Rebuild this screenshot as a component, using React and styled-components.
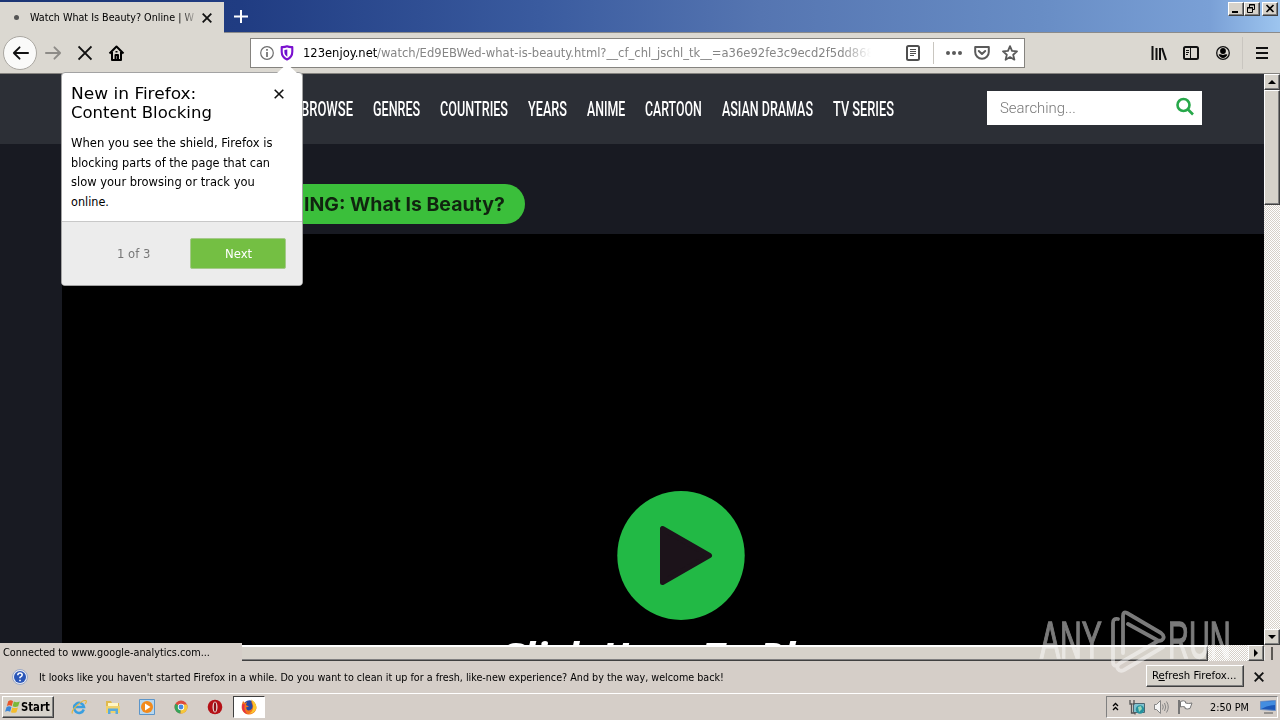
import React, { useLayoutEffect, useRef } from 'react'
import styled, { createGlobalStyle, css } from 'styled-components';

const GlobalStyle = createGlobalStyle`
    * { box-sizing: border-box; }

    body {
        margin: 0;
        overflow: hidden;
        font-family: "DejaVu Sans Condensed", "DejaVu Sans", sans-serif;
        font-size: 11px;
        color: #000;
    }

    svg { display: block; flex: none; }
`

const raised = css`
    border: 1px solid;
    border-color: #fff #404040 #404040 #fff;
    box-shadow: inset -1px -1px 0 #808080;
    background: #d6d2ca;
`

const checker = css`
    background: repeating-conic-gradient(#fff 0 25%, #d6d0c8 0 50%) 0 0 / 2px 2px;
`

const Screen = styled.div`
    position: relative;
    display: flex;
    flex-direction: column;
    width: 1280px;
    height: 720px;
    overflow: hidden;
    background: #d5cec8;
`

/* text squeezed or stretched to a given width */
const FitBox = styled.span`
    display: block;
    flex: none;
    width: ${p => p.$width}px;
    white-space: pre;
`

const FitText = styled.span`
    display: inline-block;
    transform-origin: 0 50%;
`

function Fit({ width, children }) {
    const textRef = useRef()

    useLayoutEffect(() => {
        const el = textRef.current
        el.style.transform = `scaleX(${width / el.offsetWidth})`
    }, [width, children])

    return <FitBox $width={width}><FitText ref={textRef}>{children}</FitText></FitBox>
}

const TitleBar = styled.div`
    display: flex;
    height: 33px;
    flex: none;
    border-bottom: 1px solid #8b8b8b;
    background: linear-gradient(90deg, #1b3574 0, #203c82 240px, #3a5b9f 540px, #5575b1 760px, #688dc5 1040px, #7aa0d6 1210px, #9dc5ef 1280px);
`

const Tab = styled.div`
    display: flex;
    align-items: center;
    width: 224px;
    height: 31px;
    margin: 2px 0 -1px;
    padding-left: 14px;
    background: #dbd8d1;
`

const TabDot = styled.div`
    width: 5px;
    height: 5px;
    margin-right: 11px;
    border-radius: 50%;
    background: #555;
`

const TabTitle = styled.div`
    width: 164px;
    margin-right: 8px;
    overflow: hidden;
    mask-image: linear-gradient(90deg, #000 150px, transparent 168px);
`

const NewTab = styled.div`
    padding: 10px 0 0 10px;
`

const WindowButtons = styled.div`
    display: flex;
    margin: 2px 2px 0 auto;
`

const WindowButton = styled.div`
    ${raised}
    width: 16px;
    height: 14px;
    margin-left: ${p => p.$gap || 0}px;
`

const Toolbar = styled.div`
    display: flex;
    align-items: center;
    flex: none;
    height: 41px;
    padding: 0 12px 0 3px;
    border-bottom: 1px solid #85837f;
    background: #dbd8d1;
`

const BackButton = styled.div`
    display: flex;
    align-items: center;
    justify-content: center;
    width: 34px;
    height: 34px;
    margin-right: 8px;
    border: 1px solid #aaa7a1;
    border-radius: 50%;
    background: #fafaf9;
`

const NavIcons = styled.div`
    display: flex;
    gap: 16px;
`

const UrlBar = styled.div`
    display: flex;
    align-items: center;
    width: 775px;
    height: 30px;
    margin-left: 125px;
    padding: 0 6px 0 9px;
    border: 1px solid #85837f;
    background: #fff;
`

const Url = styled.div`
    display: flex;
    width: 568px;
    margin: 0 35px 0 9px;
    overflow: hidden;
    font-size: 13px;
    line-height: 18px;
    color: #858585;
    mask-image: linear-gradient(90deg, #000 538px, transparent 568px);

    b {
        font-weight: normal;
        color: #000;
    }
`

const Divider = styled.div`
    width: 1px;
    height: ${p => p.$height}px;
    margin: ${p => p.$margin};
    background: #c9c6c0;
`

const Gap = styled.div`
    flex: none;
    width: ${p => p.$width}px;
`

const ToolIcons = styled.div`
    display: flex;
    align-items: center;
    margin-left: auto;
`

const Viewport = styled.div`
    display: flex;
    height: 571px;
    flex: none;
`

const Page = styled.div`
    display: flex;
    flex-direction: column;
    width: 1264px;
    overflow: hidden;
    background: #181a22;
`

const SiteHeader = styled.div`
    display: flex;
    flex: none;
    height: 70px;
    padding: 17px 62px 0 301px;
    background: #2c2f36;
`

const Menu = styled.div`
    display: flex;
    gap: 20px;
    font: 500 19.5px/38px Roboto, sans-serif;
    color: #fff;
`

const Search = styled.div`
    display: flex;
    justify-content: space-between;
    width: 215px;
    height: 34px;
    margin-left: auto;
    padding: 0 8px 0 13px;
    background: #fff;
    font: 300 14.5px/35px Roboto, sans-serif;
    color: #777;
`

const Pill = styled.div`
    display: flex;
    justify-content: flex-end;
    flex: none;
    width: 463px;
    height: 40px;
    margin: 40px 0 10px 62px;
    padding-right: 20px;
    border-radius: 20px;
    background: #3bbf3b;
    font: 700 19px/41px Inter, sans-serif;
    color: #10240f;
`

const Player = styled.div`
    display: flex;
    flex-direction: column;
    align-items: center;
    flex: 1;
    min-height: 0;
    margin-left: 62px;
    padding: 256px 0 0 36px;
    overflow: hidden;
    background: #000;
`

const PlayLabel = styled.div`
    margin: 10px 24px 0 0;
    font: italic 700 38px/50px "Open Sans", sans-serif;
    color: #fff;
`

const VScroll = styled.div`
    ${checker}
    width: 16px;
    display: flex;
    flex-direction: column;
    justify-content: space-between;
`

const VThumb = styled.div`
    ${raised}
    height: 115px;
    margin-bottom: auto;
`

const ScrollButton = styled.div`
    ${raised}
    display: flex;
    align-items: center;
    justify-content: center;
    width: 16px;
    height: 16px;
`

const HScroll = styled.div`
    display: flex;
    flex: none;
    height: 16px;
`

const HThumb = styled.div`
    ${raised}
    width: 1208px;
    border-top-width: 2px;
`

const HTrack = styled.div`
    ${checker}
    width: 40px;
`

const Corner = styled.div`
    width: 9px;
    margin: 2px 0 1px;
    border-right: 2px solid #5c5955;
    border-left: 1px solid #eee;
`

const Notice = styled.div`
    display: flex;
    align-items: center;
    flex: none;
    height: 32px;
    padding: 0 16px 0 12px;
    background: #d5cec8;
`

const NoticeText = styled.div`
    margin-left: 11px;
`

const RefreshButton = styled.div`
    ${raised}
    width: 98px;
    height: 22px;
    margin: -2px 10px 0 auto;
    padding-left: 5px;
    line-height: 20px;

    u { text-underline-offset: 1px; }
`

const Taskbar = styled.div`
    display: flex;
    align-items: center;
    flex: none;
    height: 27px;
    padding: 0 2px;
    border-top: 1px solid #fff;
    background: #d5cec8;
`

const StartButton = styled.div`
    ${raised}
    display: flex;
    align-items: center;
    gap: 1px;
    width: 52px;
    height: 22px;
    margin-right: 17px;
    padding-left: 2px;
    font-weight: 700;
    font-size: 12px;
`

const QuickLaunch = styled.div`
    display: flex;
    gap: 18px;
`

const ActiveApp = styled.div`
    display: flex;
    align-items: center;
    justify-content: center;
    width: 32px;
    height: 22px;
    margin-left: 10px;
    border: 1px solid;
    border-color: #404040 #fff #fff #404040;
    background: #fff;
`

const Tray = styled.div`
    display: flex;
    align-items: center;
    width: 172px;
    height: 22px;
    margin-left: auto;
    padding-left: 5px;
    border: 1px solid;
    border-color: #808080 #fff #fff #808080;
`

const Clock = styled.div`
    margin: 0 11px 0 16px;
`

const Status = styled.div`
    position: absolute;
    left: 0;
    top: 643px;
    width: 242px;
    height: 18px;
    padding-left: 3px;
    line-height: 20px;
    background: #d5cec8;
`

const Popup = styled.div`
    position: absolute;
    left: 61px;
    top: 72px;
    width: 242px;
    height: 214px;
    display: flex;
    flex-direction: column;
    border: 1px solid #a3a3a3;
    border-radius: 4px;
    background: #fff;
`

const PopupArrow = styled.svg`
    position: absolute;
    right: 4px;
    top: -9px;
`

const PopupHead = styled.div`
    display: flex;
    justify-content: space-between;
    height: 50px;
    padding: 11px 18px 0 9px;
    font-size: 16.5px;
    line-height: 19px;

    svg { margin-top: 5px; }
`

const PopupBody = styled.div`
    flex: 1;
    padding: 10px 9px 0;
    font-size: 12.5px;
    line-height: 19.7px;
`

const PopupFoot = styled.div`
    display: flex;
    align-items: center;
    height: 64px;
    padding: 0 16px 0 55px;
    border-top: 1px solid #c8c8c8;
    border-radius: 0 0 3px 3px;
    background: #ececec;
    font-size: 12.5px;
    color: #777;
`

const NextButton = styled.div`
    display: flex;
    align-items: center;
    justify-content: center;
    width: 96px;
    height: 31px;
    margin-left: auto;
    border: 1px solid #a5c98a;
    border-radius: 2px;
    background: #74bf43;
    color: #fff;
`

const Watermark = styled.div`
    position: absolute;
    left: 1040px;
    top: 609px;
    display: flex;
    align-items: center;
    height: 64px;
    font: 400 51px/66px "Liberation Sans", sans-serif;
    -webkit-text-stroke: 1.3px #fff;
    color: #fff;
    opacity: 0.48;
`

const Cross = ({ size = 10, width = 1.8 }) => (
    <svg width={size} height={size} viewBox="0 0 10 10" stroke="#111" strokeWidth={width}>
        <path d="M.7.7l8.6 8.6M9.3.7L.7 9.3" />
    </svg>
)

const Arrow = ({ color, flip }) => (
    <svg width="17" height="16" viewBox="0 0 18 16" fill="none" stroke={color} strokeWidth="2" strokeLinecap="round" strokeLinejoin="round">
        <path d={flip ? "M1 8h15M10 2l6 6-6 6" : "M17 8H2M8 2L2 8l6 6"} />
    </svg>
)

const Triangle = ({ d }) => <svg width="8" height="8" viewBox="0 0 8 8"><path d={d} /></svg>

const menuItems = [
    ["BROWSE", 52], ["GENRES", 47], ["COUNTRIES", 68], ["YEARS", 39],
    ["ANIME", 38], ["CARTOON", 57], ["ASIAN DRAMAS", 91], ["TV SERIES", 61],
]

function BrowserTabs() {
    return (
        <TitleBar>
            <Tab>
                <TabDot />
                <TabTitle><Fit width={164}>Watch What Is Beauty? Online | W</Fit></TabTitle>
                <Cross />
            </Tab>
            <NewTab>
                <svg width="14" height="13" viewBox="0 0 14 13" stroke="#fff" strokeWidth="2"><path d="M0 6.5h14M7 0v13" /></svg>
            </NewTab>
            <WindowButtons>
                <WindowButton><svg width="14" height="12"><path d="M3 8h6v2H3z" /></svg></WindowButton>
                <WindowButton>
                    <svg width="14" height="12" fill="none" stroke="#000"><path d="M4.5 4V1.5h5v5H8M4 2h6M2.5 4.5h5v5h-5zM2 5h6" /></svg>
                </WindowButton>
                <WindowButton $gap={2}>
                    <svg width="14" height="12" stroke="#000" strokeWidth="1.6"><path d="M3.500 2l7 7M10.500 2l-7 7" /></svg>
                </WindowButton>
            </WindowButtons>
        </TitleBar>
    );
}

function BrowserToolbar() {
    return (
        <Toolbar>
            <BackButton><Arrow color="#111" /></BackButton>
            <NavIcons>
                <Arrow color="#8d8b87" flip />
                <svg width="14" height="16" viewBox="0 0 14 16" stroke="#111" strokeWidth="1.9"><path d="M.5 1.500l13 13M13.500 1.500L.5 14.500" /></svg>
                <svg width="17" height="16" viewBox="-.5 0 17 16" fill="none" stroke="#000" strokeWidth="2" strokeLinejoin="round">
                    <path d="M1 8.500L8 1.500l7 7M3.500 7v8h9V7" />
                    <path d="M7 10h2.500v5H7zM8 6v1.500" />
                </svg>
            </NavIcons>
            <UrlBar>
                <svg width="14" height="14" viewBox="0 0 14 14" fill="none" stroke="#6e6e6e">
                    <circle cx="7" cy="7" r="6.300" strokeWidth="1.200" /><path d="M7 6v5M7 3v1.700" strokeWidth="1.700" />
                </svg>
                <Gap $width={6} />
                <svg width="14" height="16" viewBox="0 0 14 16" fill="none">
                    <path d="M7 1.300c1.700.7 3.700.9 5.300.8v4.600c0 4-2.700 6.600-5.300 7.800-2.600-1.200-5.300-3.800-5.300-7.800V2.100C3.300 2.200 5.300 2 7 1.300z" stroke="#7a10cf" strokeWidth="2.100" strokeLinejoin="round" />
                    <path d="M7.300 4.500v7.300C5.400 10.600 4.400 9 4.400 7V4.900z" fill="#6c10cf" />
                </svg>
                <Url>
                    <b><Fit width={74}>123enjoy.net</Fit></b>
                    <Fit width={497}>/watch/Ed9EBWed-what-is-beauty.html?__cf_chl_jschl_tk__=a36e92fe3c9ecd2f5dd868</Fit>
                </Url>
                <svg width="14" height="16" viewBox="0 0 14 16" fill="none" stroke="#4f4f4f">
                    <rect x="1" y="1" width="12" height="14" rx="1.500" strokeWidth="2" />
                    <path d="M4 4.500h6M4 6.500h6M4 8.500h6M4 10.500h4" />
                </svg>
                <Divider $height={22} $margin="0 12px 0 13px" />
                <svg width="16" height="4" viewBox="0 0 16 4" fill="#5a5a5a"><circle cx="2" cy="2" r="2" /><circle cx="8" cy="2" r="2" /><circle cx="14" cy="2" r="2" /></svg>
                <Gap $width={12} />
                <svg width="16" height="14" viewBox="0 0 16 14" fill="none" stroke="#5a5a5a" strokeWidth="2" strokeLinecap="round" strokeLinejoin="round">
                    <path d="M1.200 1h13.600v5a6.800 6.800 0 0 1-13.600 0z" /><path d="M4.800 5L8 8l3.200-3" />
                </svg>
                <Gap $width={12} />
                <svg width="16" height="16" viewBox="0 0 16 16" fill="none" stroke="#5a5a5a" strokeWidth="1.800" strokeLinejoin="round">
                    <path d="M8 1.200l2 4.700 5 .5-3.800 3.300 1.200 5L8 12.100l-4.400 2.600 1.200-5L1 6.400l5-.5z" />
                </svg>
            </UrlBar>
            <ToolIcons>
                <svg width="16" height="15" viewBox="0 0 16 15" stroke="#111" strokeWidth="2"><path d="M1.500 0v14M5.500 2v12M9 2v12M11 2l4 12" /></svg>
                <Gap $width={16} />
                <svg width="16" height="14" viewBox="0 0 16 14" fill="none" stroke="#111">
                    <rect x="1" y="1" width="14" height="12" rx="1.500" strokeWidth="2" />
                    <path d="M7.500 1v12M3 4.500h3M3 6.500h3M3 8.500h2" />
                </svg>
                <Gap $width={17} />
                <svg width="14" height="14" viewBox="0 0 14 14">
                    <circle cx="7" cy="7" r="6.300" fill="none" stroke="#111" strokeWidth="1.300" />
                    <circle cx="7" cy="5" r="2.900" /><path d="M2.600 8.800c1.400-.9 2.400-.4 4.400 .3 2-.7 3-1.200 4.400-.3-1 2-2.400 3.100-4.400 3.100s-3.400-1.100-4.400-3.100z" />
                </svg>
                <Divider $height={32} $margin="0 13px 0 12px" />
                <svg width="12" height="12" viewBox="0 0 12 12" stroke="#111" strokeWidth="2"><path d="M0 1h12M0 6h12M0 11h12" /></svg>
            </ToolIcons>
        </Toolbar>
    );
}

function WatchPage() {
    return (
        <Page>
            <SiteHeader>
                <Menu>
                    {menuItems.map(([label, width]) => <Fit key={label} width={width}>{label}</Fit>)}
                </Menu>
                <Search>
                    <Fit width={76}>Searching...</Fit>
                    <svg width="18" height="32" viewBox="0 0 18 32" fill="none" stroke="#27a84a" strokeWidth="2.600">
                        <circle cx="7.500" cy="14" r="6" /><path d="M12 18.500l5 5" />
                    </svg>
                </Search>
            </SiteHeader>
            <Pill><Fit width={201}>ING: What Is Beauty?</Fit></Pill>
            <Player>
                <svg width="128" height="130" viewBox="0 0 128 130">
                    <ellipse cx="64" cy="65.500" rx="63.700" ry="64.500" fill="#22b945" />
                    <path d="M45.500 38.500v54l47-27z" fill="#1c131a" stroke="#1c131a" strokeWidth="5" strokeLinejoin="round" />
                </svg>
                <PlayLabel><Fit width={342}>Click Here To Play</Fit></PlayLabel>
            </Player>
        </Page>
    );
}

function FirefoxTour() {
    return (
        <Popup>
            <PopupArrow width="22" height="10" viewBox="0 0 22 10">
                <path d="M0 10L9 1.500q2-1.500 4 0L22 10z" fill="#fff" stroke="none" />
            </PopupArrow>
            <PopupHead>
                <div>
                    <Fit width={125}>New in Firefox:</Fit>
                    <Fit width={141}>Content Blocking</Fit>
                </div>
                <Cross width={1.6} />
            </PopupHead>
            <PopupBody>
                <Fit width={201}>When you see the shield, Firefox is</Fit>
                <Fit width={199}>blocking parts of the page that can</Fit>
                <Fit width={184}>slow your browsing or track you</Fit>
                <Fit width={38}>online.</Fit>
            </PopupBody>
            <PopupFoot>
                <Fit width={33}>1 of 3</Fit>
                <NextButton><Fit width={27}>Next</Fit></NextButton>
            </PopupFoot>
        </Popup>
    );
}

function WindowsTaskbar() {
    return (
        <Taskbar>
            <StartButton>
                <svg width="15" height="16" viewBox="0 0 14 15">
                    <path d="M3 2q2.500-1.500 4.500 0L6.300 6.500Q4 5.200 1.700 6.500z" fill="#e8562a" />
                    <path d="M8.300 2.400q2.500 1.200 5.500 0l-1.500 4.500q-2.800 1.200-5.200 0z" fill="#7bb83a" />
                    <path d="M1.500 7.400q2.300-1.300 4.500 0L4.800 12Q2.500 10.700 0 12z" fill="#3b86d8" />
                    <path d="M6.800 7.900q2.500 1.200 5.300 0l-1.400 4.500q-2.600 1.200-5.200 0z" fill="#f4bd2c" />
                </svg>
                <Fit width={29}>Start</Fit>
            </StartButton>
            <QuickLaunch>
                <svg width="16" height="16" viewBox="0 0 16 16" fill="none">
                    <path d="M12.800 10.500A5 5 0 1 1 13 8H4.500" stroke="#3a9fe0" strokeWidth="2.500" />
                    <path d="M1.500 14.500C-1 12 10 1 14.700 1.500c1.300.4.300 2.500-.5 3.500" stroke="#e6b840" strokeWidth="1.200" />
                </svg>
                <svg width="16" height="16" viewBox="0 0 16 16">
                    <path d="M1 2h5l1 2h7v9H1z" fill="#e0b94d" /><path d="M3 4h10v5H3z" fill="#fff6c5" />
                    <path d="M1 7h14v7H1z" fill="#f0d26c" /><path d="M3 15V9.500h10V15h-2.500v-3h-5v3z" fill="#5aaadb" />
                </svg>
                <svg width="16" height="16" viewBox="0 0 16 16">
                    <path d="M.5.5h15v15H.5z" fill="#b7d7ef" stroke="#5c95c9" /><circle cx="8" cy="8" r="6" fill="#f28a1c" /><path d="M6 4.500v7L11.500 8z" fill="#fff" />
                </svg>
                <svg width="16" height="16" viewBox="0 0 16 16">
                    <circle cx="8" cy="8" r="6.500" fill="#dd4b3e" /><path d="M8 8L2.400 4.800A6.500 6.500 0 0 0 7.500 14.500z" fill="#35a45a" />
                    <path d="M8 8l-.5 6.500A6.500 6.500 0 0 0 14 5.500H8z" fill="#f5c83b" /><circle cx="8" cy="8" r="3.200" fill="#fff" /><circle cx="8" cy="8" r="2.400" fill="#4788e0" />
                </svg>
                <svg width="16" height="16" viewBox="0 0 16 16"><circle cx="8" cy="8" r="7.300" fill="#b51016" /><ellipse cx="8" cy="8" rx="2.500" ry="5.500" fill="#e8dad7" /><ellipse cx="8" cy="8" rx="1.200" ry="4.700" fill="#8d0f14" /></svg>
            </QuickLaunch>
            <ActiveApp>
                <svg width="16" height="16" viewBox="0 0 16 16">
                    <circle cx="8.500" cy="7.500" r="6.300" fill="#2549a5" />
                    <path d="M2 2l2 2 2-1-1 3 3 1.500-3 1 1 2.500c3 1.500 6-1 5.500-4.500L10 2c4 1.500 6 5 5.300 8C14 14 11 15.600 7.500 15.500 3 15 .3 11.500.7 7.500 .8 5 1.500 4 2 2z" fill="#f2731d" />
                    <path d="M10 .5c5 2.500 7 7.500 4 11.500-2 2.300-4.500 2.800-6 2.500 4-1.500 6-7 2-14z" fill="#fbc62f" />
                    <path d="M1.500 5c-1.500 5 1 9 5 10.200C4 12.500 2.500 9 4 5.500z" fill="#e42f47" />
                </svg>
            </ActiveApp>
            <Tray>
                <svg width="8" height="10" viewBox="0 0 8 10" fill="none" stroke="#000" strokeWidth="1.300"><path d="M1 4l2.500-2.500L6 4M1 8l2.500-2.500L6 8" /></svg>
                <Gap $width={9} />
                <svg width="16" height="16" viewBox="0 0 16 16">
                    <path d="M4.500 4.500h11v9h-11z" fill="#7fc2d0" stroke="#4c6670" /><circle cx="11" cy="10.500" r="4.200" fill="#26929e" /><path d="M9 8l3-1 1 3-3 3z" fill="#9cd5b6" />
                    <path d="M1 1v4h1.500v9H6v1.500M5 1v4H3.500" fill="none" stroke="#555" strokeWidth="1.300" />
                </svg>
                <Gap $width={8} />
                <svg width="17" height="16" viewBox="0 0 17 16" fill="#f5f5f5" stroke="#858585">
                    <path d="M1.500 5.500h2l4-4v13l-4-4h-2z" /><path d="M9.500 5.500q1.500 2.500 0 5M11.500 4q2.500 4 0 8M13.500 2.500q3.500 5.500 0 11" fill="none" />
                </svg>
                <Gap $width={7} />
                <svg width="17" height="16" viewBox="0 0 17 16"><path d="M3.500 2.500q3-1.500 5 0v1.500q3 1 6.500 0l-2 5.500q-3 1-5 0V8q-2.500-1-4.500 0z" fill="#fff" stroke="#777" /><path d="M2 1v14" stroke="#777" strokeWidth="2" /></svg>
                <Clock><Fit width={39}>2:50 PM</Fit></Clock>
                <svg width="16" height="14" viewBox="0 0 16 14"><path d="M.5 1.500l15-1v10l-15-1z" fill="#1c58b8" stroke="#7091c2" /><path d="M1 2l14-1v4q-7 0-14 4z" fill="#438de0" /><path d="M4 13h9" stroke="#555" /></svg>
            </Tray>
        </Taskbar>
    );
}

export default function App() {
    return (
        <Screen>
            <GlobalStyle />
            <BrowserTabs />
            <BrowserToolbar />
            <Viewport>
                <WatchPage />
                <VScroll>
                    <ScrollButton><Triangle d="M0 6h8L4 2z" /></ScrollButton>
                    <VThumb />
                    <ScrollButton><Triangle d="M0 2h8L4 6z" /></ScrollButton>
                </VScroll>
            </Viewport>
            <HScroll>
                <HThumb />
                <HTrack />
                <ScrollButton><Triangle d="M2 0v8l4-4z" /></ScrollButton>
                <Corner />
            </HScroll>
            <Notice>
                <svg width="16" height="16" viewBox="0 0 16 16">
                    <circle cx="8" cy="8" r="7.500" fill="#e7eaf3" stroke="#9ca9c6" /><circle cx="8" cy="8" r="6" fill="#2a56b8" />
                    <path d="M5.800 6.200Q5.800 4 8 4t2.200 2Q10.200 7 8 8.300v1" fill="none" stroke="#fff" strokeWidth="1.500" /><path d="M7.200 10.700h1.600v1.600H7.200z" fill="#fff" />
                </svg>
                <NoticeText>
                    <Fit width={685}>It looks like you haven't started Firefox in a while. Do you want to clean it up for a fresh, like-new experience? And by the way, welcome back!</Fit>
                </NoticeText>
                <RefreshButton><Fit width={85}>R<u>e</u>fresh Firefox...</Fit></RefreshButton>
                <Cross width={1.9} />
            </Notice>
            <WindowsTaskbar />
            <Status><Fit width={207}>Connected to www.google-analytics.com...</Fit></Status>
            <FirefoxTour />
            <Watermark>
                <Fit width={62}>ANY</Fit>
                <svg width="66" height="64" viewBox="0 0 66 64" fill="none" stroke="#fff" strokeWidth="3.800" strokeLinejoin="round" strokeLinecap="round">
                    <path d="M16 10q-5-1-5 4v39q0 5 5 3M21 44V7q0-5 4-3l34 20q4 3 2 6t-6 1L26 15M56 32L18 54q-4 3-2 6t6 1L61 38" />
                </svg>
                <Fit width={63}>RUN</Fit>
            </Watermark>
        </Screen>
    );
}
